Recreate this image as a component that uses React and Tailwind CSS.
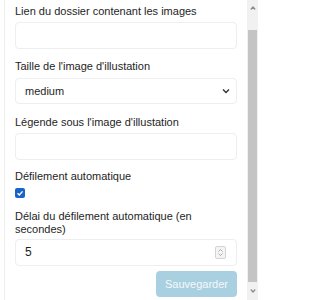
import React from "react";

export default function App() {
  return (
    <div className="w-[260px] h-[300px] bg-white overflow-hidden flex" style={{ fontFamily: '"Liberation Sans", Arial, sans-serif' }}>
      <div className="h-[300px] ml-[4px] border-l border-[#efefef] flex-1 overflow-hidden">
        <div className="pl-[10px] pr-[10px] pt-[5px] text-[11px] leading-[13px] text-[#1e1e1e]">
          <div>Lien du dossier contenant les images</div>
          <div className="mt-[4px] h-[27px] border border-[#eceef0] rounded-[4px]"></div>
          <div className="mt-[11px]">Taille de l'image d'illustation</div>
          <div className="mt-[5px] h-[26px] border border-[#eceef0] rounded-[4px] flex items-center justify-between pl-[9px] pr-[6px]">
            <span>medium</span>
            <svg width="8" height="6" viewBox="0 0 8 6" fill="none"><path d="M1 1.5l3 3 3-3" stroke="#333" strokeWidth="1.4" /></svg>
          </div>
          <div className="mt-[12px]">Légende sous l'image d'illustation</div>
          <div className="mt-[4px] h-[27px] border border-[#eceef0] rounded-[4px]"></div>
          <div className="mt-[10px]">Défilement automatique</div>
          <div className="mt-[5px] w-[10px] h-[10px] rounded-[2px] bg-[#1a63c8] flex items-center justify-center">
            <svg width="8" height="8" viewBox="0 0 8 8" fill="none"><path d="M1.5 4.2l1.8 1.8 3.3-3.6" stroke="#fff" strokeWidth="1.4" /></svg>
          </div>
          <div className="mt-[12px]">Délai du défilement automatique (en secondes)</div>
          <div className="mt-[3px] h-[27px] border border-[#eceef0] rounded-[4px] flex items-center justify-between pl-[9px] pr-[10px]">
            <span className="text-[12px]">5</span>
            <div className="w-[11px] h-[13px] border border-[#d4d4d4] rounded-[2px] bg-[#f4f4f4] flex flex-col items-center justify-center gap-[1px]">
              <svg width="5" height="3" viewBox="0 0 5 3" fill="none"><path d="M0.5 2.5l2-2 2 2" stroke="#999" strokeWidth="0.8" /></svg>
              <svg width="5" height="3" viewBox="0 0 5 3" fill="none"><path d="M0.5 0.5l2 2 2-2" stroke="#999" strokeWidth="0.8" /></svg>
            </div>
          </div>
          <div className="mt-[5px] flex justify-end">
            <div className="h-[26px] w-[81px] rounded-[4px] bg-[#a9d0e0] text-[#f4f9fb] flex items-center justify-center text-[11px]">Sauvegarder</div>
          </div>
        </div>
      </div>
      <div className="w-[11px] h-[300px] bg-[#f1f1f1] flex flex-col mr-[2px]">
        <div className="h-[15px] flex items-center justify-center">
          <svg width="6" height="4" viewBox="0 0 6 4" fill="none"><path d="M0.8 3.5L3 1L5.2 3.5" stroke="#8a8a8a" strokeWidth="1.2" /></svg>
        </div>
        <div className="mt-[15px] h-[252px] mx-[1px] bg-[#c4c4c4]"></div>
        <div className="flex-1 flex items-center justify-center">
          <svg width="6" height="4" viewBox="0 0 6 4" fill="none"><path d="M0.8 0.5L3 3L5.2 0.5" stroke="#8a8a8a" strokeWidth="1.2" /></svg>
        </div>
      </div>
    </div>
  );
}
